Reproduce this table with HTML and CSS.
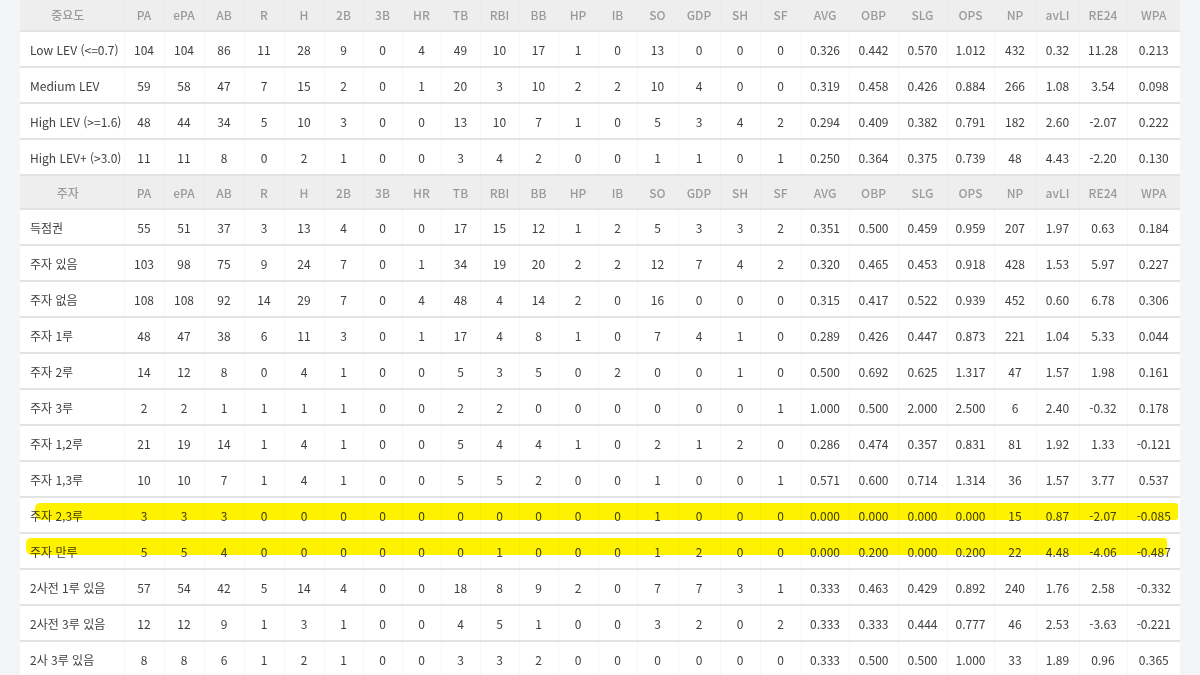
FILE: index.html
```html
<!DOCTYPE html>
<html lang="ko">
<head>
<meta charset="utf-8">
<title>Splits</title>
<link rel="stylesheet" href="styles.css">
</head>
<body>
<div class="wrap">
<table class="stats">
<colgroup>
<col style="width:104px"><col style="width:40px"><col style="width:40px"><col style="width:40px"><col style="width:40px"><col style="width:40px"><col style="width:39px"><col style="width:39px"><col style="width:39px"><col style="width:39px"><col style="width:39px"><col style="width:39px"><col style="width:40px"><col style="width:39px"><col style="width:41px"><col style="width:42px"><col style="width:40px"><col style="width:41px"><col style="width:48px"><col style="width:49px"><col style="width:49px"><col style="width:47px"><col style="width:42px"><col style="width:43px"><col style="width:48px"><col style="width:53px">
</colgroup>
<tbody>
<tr class="head"><th>중요도</th><th>PA</th><th>ePA</th><th>AB</th><th>R</th><th>H</th><th>2B</th><th>3B</th><th>HR</th><th>TB</th><th>RBI</th><th>BB</th><th>HP</th><th>IB</th><th>SO</th><th>GDP</th><th>SH</th><th>SF</th><th>AVG</th><th>OBP</th><th>SLG</th><th>OPS</th><th>NP</th><th>avLI</th><th>RE24</th><th>WPA</th></tr>
<tr><td>Low LEV (&lt;=0.7)</td><td>104</td><td>104</td><td>86</td><td>11</td><td>28</td><td>9</td><td>0</td><td>4</td><td>49</td><td>10</td><td>17</td><td>1</td><td>0</td><td>13</td><td>0</td><td>0</td><td>0</td><td>0.326</td><td>0.442</td><td>0.570</td><td>1.012</td><td>432</td><td>0.32</td><td>11.28</td><td>0.213</td></tr>
<tr><td>Medium LEV</td><td>59</td><td>58</td><td>47</td><td>7</td><td>15</td><td>2</td><td>0</td><td>1</td><td>20</td><td>3</td><td>10</td><td>2</td><td>2</td><td>10</td><td>4</td><td>0</td><td>0</td><td>0.319</td><td>0.458</td><td>0.426</td><td>0.884</td><td>266</td><td>1.08</td><td>3.54</td><td>0.098</td></tr>
<tr><td>High LEV (&gt;=1.6)</td><td>48</td><td>44</td><td>34</td><td>5</td><td>10</td><td>3</td><td>0</td><td>0</td><td>13</td><td>10</td><td>7</td><td>1</td><td>0</td><td>5</td><td>3</td><td>4</td><td>2</td><td>0.294</td><td>0.409</td><td>0.382</td><td>0.791</td><td>182</td><td>2.60</td><td>-2.07</td><td>0.222</td></tr>
<tr><td>High LEV+ (&gt;3.0)</td><td>11</td><td>11</td><td>8</td><td>0</td><td>2</td><td>1</td><td>0</td><td>0</td><td>3</td><td>4</td><td>2</td><td>0</td><td>0</td><td>1</td><td>1</td><td>0</td><td>1</td><td>0.250</td><td>0.364</td><td>0.375</td><td>0.739</td><td>48</td><td>4.43</td><td>-2.20</td><td>0.130</td></tr>
<tr class="head"><th>주자</th><th>PA</th><th>ePA</th><th>AB</th><th>R</th><th>H</th><th>2B</th><th>3B</th><th>HR</th><th>TB</th><th>RBI</th><th>BB</th><th>HP</th><th>IB</th><th>SO</th><th>GDP</th><th>SH</th><th>SF</th><th>AVG</th><th>OBP</th><th>SLG</th><th>OPS</th><th>NP</th><th>avLI</th><th>RE24</th><th>WPA</th></tr>
<tr><td>득점권</td><td>55</td><td>51</td><td>37</td><td>3</td><td>13</td><td>4</td><td>0</td><td>0</td><td>17</td><td>15</td><td>12</td><td>1</td><td>2</td><td>5</td><td>3</td><td>3</td><td>2</td><td>0.351</td><td>0.500</td><td>0.459</td><td>0.959</td><td>207</td><td>1.97</td><td>0.63</td><td>0.184</td></tr>
<tr><td>주자 있음</td><td>103</td><td>98</td><td>75</td><td>9</td><td>24</td><td>7</td><td>0</td><td>1</td><td>34</td><td>19</td><td>20</td><td>2</td><td>2</td><td>12</td><td>7</td><td>4</td><td>2</td><td>0.320</td><td>0.465</td><td>0.453</td><td>0.918</td><td>428</td><td>1.53</td><td>5.97</td><td>0.227</td></tr>
<tr><td>주자 없음</td><td>108</td><td>108</td><td>92</td><td>14</td><td>29</td><td>7</td><td>0</td><td>4</td><td>48</td><td>4</td><td>14</td><td>2</td><td>0</td><td>16</td><td>0</td><td>0</td><td>0</td><td>0.315</td><td>0.417</td><td>0.522</td><td>0.939</td><td>452</td><td>0.60</td><td>6.78</td><td>0.306</td></tr>
<tr><td>주자 1루</td><td>48</td><td>47</td><td>38</td><td>6</td><td>11</td><td>3</td><td>0</td><td>1</td><td>17</td><td>4</td><td>8</td><td>1</td><td>0</td><td>7</td><td>4</td><td>1</td><td>0</td><td>0.289</td><td>0.426</td><td>0.447</td><td>0.873</td><td>221</td><td>1.04</td><td>5.33</td><td>0.044</td></tr>
<tr><td>주자 2루</td><td>14</td><td>12</td><td>8</td><td>0</td><td>4</td><td>1</td><td>0</td><td>0</td><td>5</td><td>3</td><td>5</td><td>0</td><td>2</td><td>0</td><td>0</td><td>1</td><td>0</td><td>0.500</td><td>0.692</td><td>0.625</td><td>1.317</td><td>47</td><td>1.57</td><td>1.98</td><td>0.161</td></tr>
<tr><td>주자 3루</td><td>2</td><td>2</td><td>1</td><td>1</td><td>1</td><td>1</td><td>0</td><td>0</td><td>2</td><td>2</td><td>0</td><td>0</td><td>0</td><td>0</td><td>0</td><td>0</td><td>1</td><td>1.000</td><td>0.500</td><td>2.000</td><td>2.500</td><td>6</td><td>2.40</td><td>-0.32</td><td>0.178</td></tr>
<tr><td>주자 1,2루</td><td>21</td><td>19</td><td>14</td><td>1</td><td>4</td><td>1</td><td>0</td><td>0</td><td>5</td><td>4</td><td>4</td><td>1</td><td>0</td><td>2</td><td>1</td><td>2</td><td>0</td><td>0.286</td><td>0.474</td><td>0.357</td><td>0.831</td><td>81</td><td>1.92</td><td>1.33</td><td>-0.121</td></tr>
<tr><td>주자 1,3루</td><td>10</td><td>10</td><td>7</td><td>1</td><td>4</td><td>1</td><td>0</td><td>0</td><td>5</td><td>5</td><td>2</td><td>0</td><td>0</td><td>1</td><td>0</td><td>0</td><td>1</td><td>0.571</td><td>0.600</td><td>0.714</td><td>1.314</td><td>36</td><td>1.57</td><td>3.77</td><td>0.537</td></tr>
<tr><td>주자 2,3루</td><td>3</td><td>3</td><td>3</td><td>0</td><td>0</td><td>0</td><td>0</td><td>0</td><td>0</td><td>0</td><td>0</td><td>0</td><td>0</td><td>1</td><td>0</td><td>0</td><td>0</td><td>0.000</td><td>0.000</td><td>0.000</td><td>0.000</td><td>15</td><td>0.87</td><td>-2.07</td><td>-0.085</td></tr>
<tr><td>주자 만루</td><td>5</td><td>5</td><td>4</td><td>0</td><td>0</td><td>0</td><td>0</td><td>0</td><td>0</td><td>1</td><td>0</td><td>0</td><td>0</td><td>1</td><td>2</td><td>0</td><td>0</td><td>0.000</td><td>0.200</td><td>0.000</td><td>0.200</td><td>22</td><td>4.48</td><td>-4.06</td><td>-0.487</td></tr>
<tr><td>2사전 1루 있음</td><td>57</td><td>54</td><td>42</td><td>5</td><td>14</td><td>4</td><td>0</td><td>0</td><td>18</td><td>8</td><td>9</td><td>2</td><td>0</td><td>7</td><td>7</td><td>3</td><td>1</td><td>0.333</td><td>0.463</td><td>0.429</td><td>0.892</td><td>240</td><td>1.76</td><td>2.58</td><td>-0.332</td></tr>
<tr><td>2사전 3루 있음</td><td>12</td><td>12</td><td>9</td><td>1</td><td>3</td><td>1</td><td>0</td><td>0</td><td>4</td><td>5</td><td>1</td><td>0</td><td>0</td><td>3</td><td>2</td><td>0</td><td>2</td><td>0.333</td><td>0.333</td><td>0.444</td><td>0.777</td><td>46</td><td>2.53</td><td>-3.63</td><td>-0.221</td></tr>
<tr><td>2사 3루 있음</td><td>8</td><td>8</td><td>6</td><td>1</td><td>2</td><td>1</td><td>0</td><td>0</td><td>3</td><td>3</td><td>2</td><td>0</td><td>0</td><td>0</td><td>0</td><td>0</td><td>0</td><td>0.333</td><td>0.500</td><td>0.500</td><td>1.000</td><td>33</td><td>1.89</td><td>0.96</td><td>0.365</td></tr>
</tbody>
</table>
<div class="mark mark-a"></div>
<div class="mark mark-b"></div>
</div>
</body>
</html>
```
FILE: styles.css
```css
html, body {
  margin: 0;
  padding: 0;
  background: #f4f5f7;
  overflow: hidden;
}
.wrap {
  position: relative;
  width: 1160px;
  margin: -2px 0 0 20px;
}
.stats {
  width: 1160px;
  table-layout: fixed;
  border-collapse: collapse;
  background: #ffffff;
  font-family: "Noto Sans CJK KR", "Noto Sans", sans-serif;
  font-size: 12px;
  color: #404040;
}
.stats td, .stats th {
  padding: 0;
  text-align: center;
  white-space: nowrap;
  border-bottom: 2px solid #e3e3e3;
  border-left: 1px solid #f7f7f7;
}
.stats td:first-child, .stats th:first-child {
  border-left: none;
}
.stats td {
  height: 34px;
}
.stats td:first-child {
  text-align: left;
  padding-left: 10px;
}
.stats .head th {
  height: 32px;
  background: #eeeeee;
  color: #9a9a9a;
  font-weight: 500;
  border-left-color: #ebebeb;
}
.stats .head th:first-child {
  padding-right: 8px;
}
.mark {
  position: absolute;
  background: #fff200;
  mix-blend-mode: multiply;
  border-radius: 5px 3px 3px 6px;
}
.mark-a {
  left: 15px;
  top: 505px;
  width: 1143px;
  height: 17px;
}
.mark-b {
  left: 6px;
  top: 540px;
  width: 1141px;
  height: 17px;
}
```
